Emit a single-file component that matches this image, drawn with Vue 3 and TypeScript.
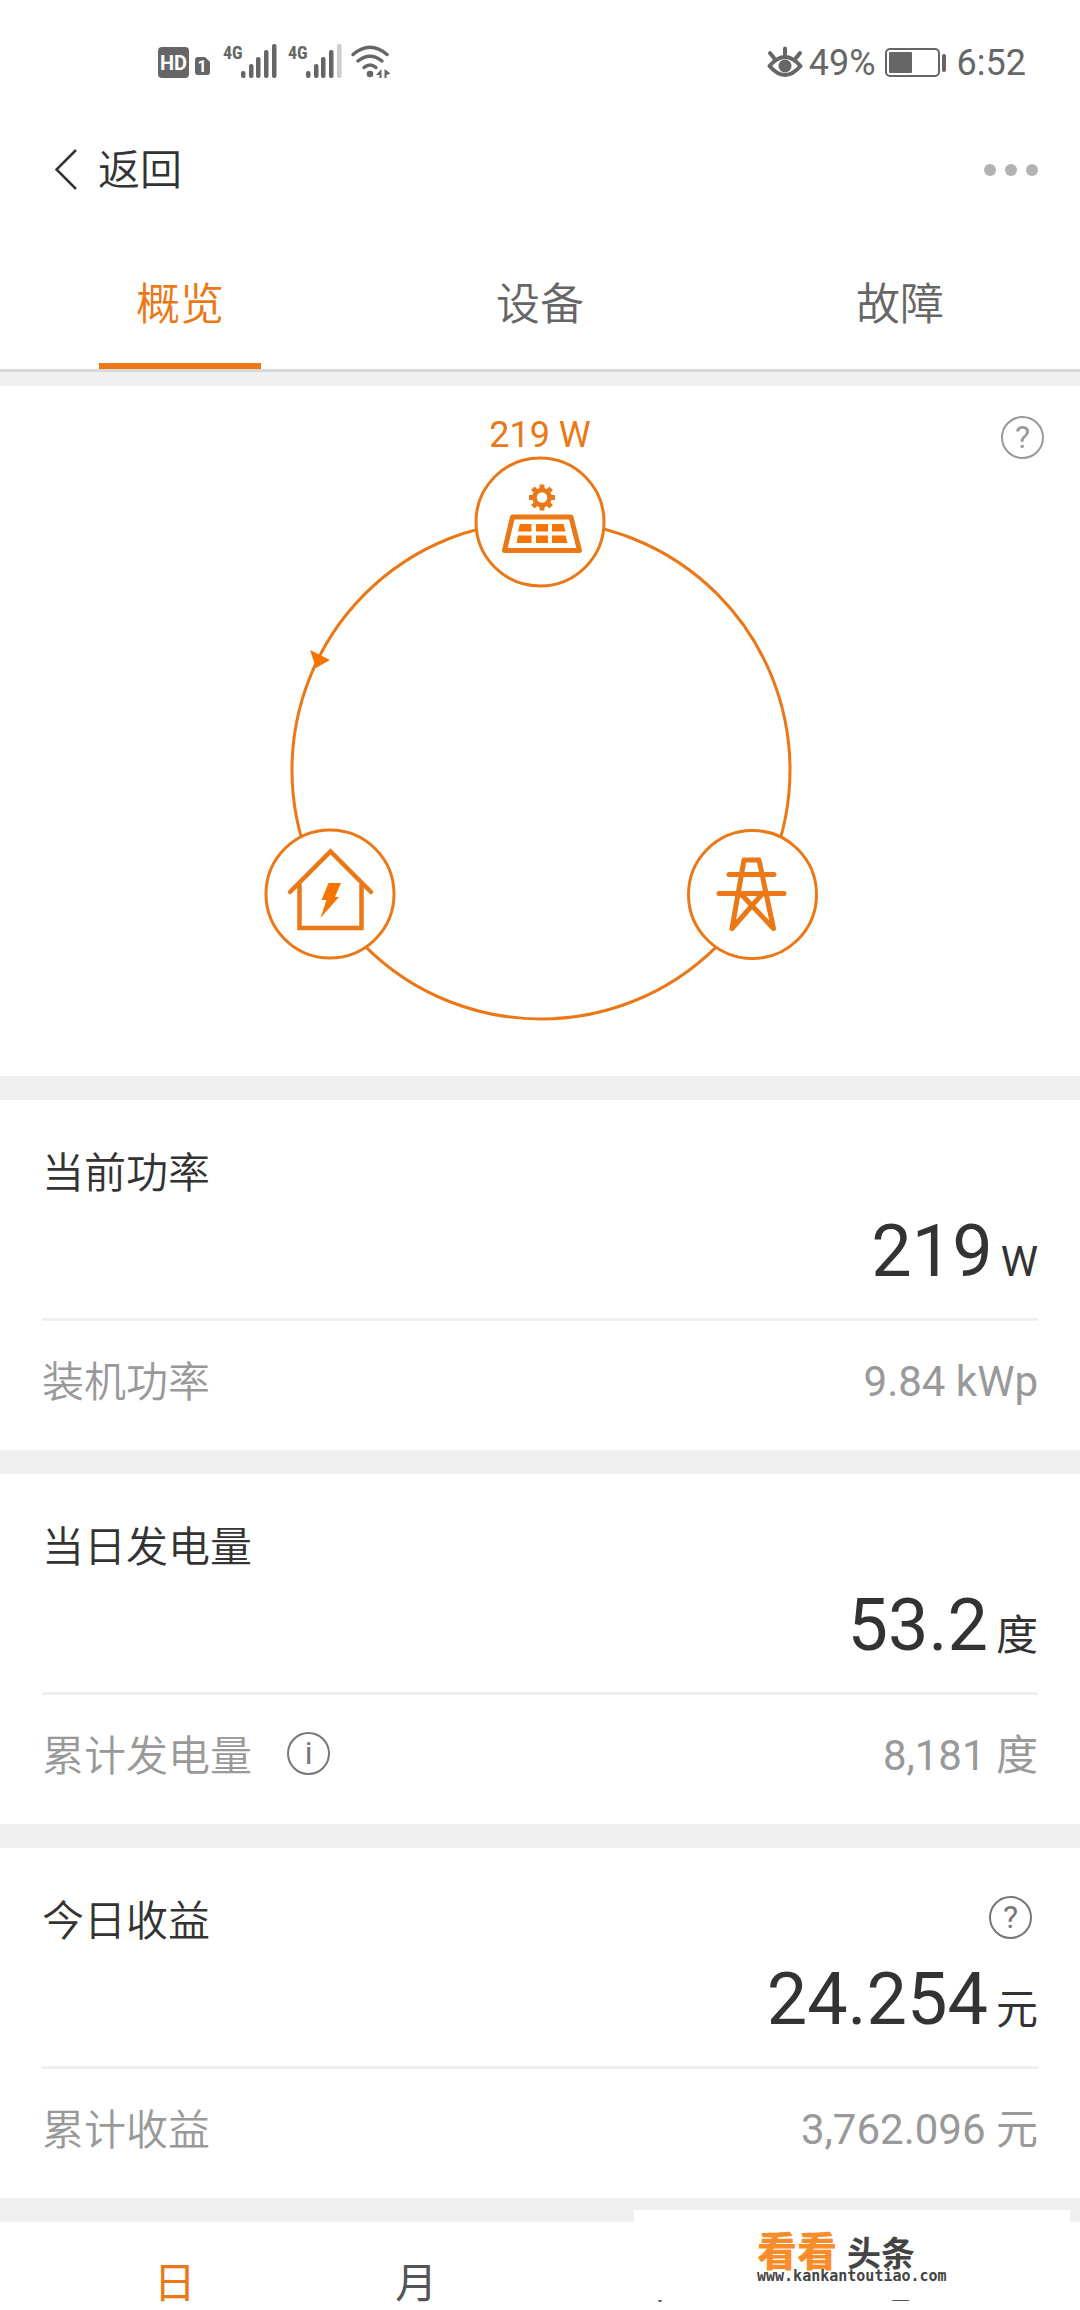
<script setup lang="ts">
import { ref } from 'vue'

interface Metric {
  title: string
  value: string
  unit: string
  totalTitle: string
  total: string
  help?: boolean
  info?: boolean
}

const tabs: string[] = ['概览', '设备', '故障']
const activeTab = ref(0)

const periods: string[] = ['日', '月', '年', '总']
const activePeriod = ref(0)

const metrics: Metric[] = [
  { title: '当前功率', value: '219', unit: 'W', totalTitle: '装机功率', total: '9.84 kWp' },
  { title: '当日发电量', value: '53.2', unit: '度', totalTitle: '累计发电量', total: '8,181 度', info: true },
  { title: '今日收益', value: '24.254', unit: '元', totalTitle: '累计收益', total: '3,762.096 元', help: true },
]

const gearAngles: number[] = [0, 45, 90, 135, 180, 225, 270, 315]
const signalBars = [
  { x: 0, y: 29, h: 6 },
  { x: 8, y: 22, h: 13 },
  { x: 15, y: 15, h: 20 },
  { x: 23, y: 8, h: 27 },
  { x: 31, y: 2, h: 33 },
]
</script>

<template>
  <div class="page">
    <div class="status">
      <svg class="status-left" width="240" height="40" viewBox="0 0 240 40" fill="#666">
        <rect x="1" y="4" width="31" height="31" rx="4" />
        <text x="16.5" y="27" font-size="20" font-weight="700" fill="#fff" text-anchor="middle">HD</text>
        <path d="M41 14h7l5 5v10a3 3 0 0 1-3 3H41a3 3 0 0 1-3-3V17a3 3 0 0 1 3-3z" />
        <text x="45" y="29" font-size="16" font-weight="700" fill="#fff" text-anchor="middle">1</text>
        <g v-for="n in 2" :key="n" :transform="`translate(${(n - 1) * 65} 0)`">
          <text class="narrow" x="66" y="16" font-size="18" font-weight="700">4G</text>
          <rect
            v-for="(b, i) in signalBars"
            :key="i"
            :x="84 + b.x"
            :y="b.y - 1"
            width="4.500"
            :height="b.h + 1"
            rx="2"
            :fill="n === 2 && i === 4 ? '#ccc' : '#666'"
          />
        </g>
        <g fill="none" stroke="#666" stroke-width="3.500" stroke-linecap="round">
          <path d="M196 11.500Q213-3 230 11.500" />
          <path d="M201 18Q213 8.500 225 18" />
          <path d="M207 24.500Q213 19.500 219 24.500" />
        </g>
        <circle cx="213" cy="31" r="3.300" />
        <path d="M219 32l5.500-6v9h-2v-3zM227.500 26l6 4.500-4 1.500v3h-2z" />
      </svg>
      <div class="status-right">
        <svg width="38" height="34" viewBox="0 0 38 34" fill="none" stroke="#666" stroke-width="4" stroke-linecap="round">
          <path d="M2.500 20Q18 2 33.500 20Q18 38 2.500 20z" stroke-linejoin="round" />
          <path d="M18 2.500v6M3 7l4 5M33 7l-4 5" />
          <circle cx="18" cy="20" r="6.500" fill="#666" stroke="none" />
        </svg>
        <span class="percent">49%</span>
        <svg width="62" height="30" viewBox="0 0 62 30">
          <rect x="1" y="1" width="53" height="27" rx="4" fill="none" stroke="#666" stroke-width="2" />
          <rect x="4" y="4" width="23" height="21" rx="1" fill="#666" />
          <rect x="57" y="6" width="4" height="18" rx="2" fill="#666" />
        </svg>
        <time class="clock">6:52</time>
      </div>
    </div>

    <header class="header">
      <button class="back" type="button">
        <svg width="22" height="42" viewBox="0 0 22 42" fill="none" stroke="#333" stroke-width="2.500">
          <path d="M21 1L1.500 20.500L21 40" />
        </svg>
        <span>返回</span>
      </button>
      <button class="more" type="button" aria-label="更多"><i></i><i></i><i></i></button>
    </header>

    <nav class="tabs">
      <button
        v-for="(tab, i) in tabs"
        :key="tab"
        type="button"
        :class="['tab', { active: i === activeTab }]"
        @click="activeTab = i"
      >
        {{ tab }}
      </button>
    </nav>

    <main>
      <section class="flow">
        <button class="round flow-help" type="button" aria-label="帮助">?</button>
        <p class="flow-power">219 W</p>
        <svg class="flow-chart" width="560" height="571" viewBox="0 3 560 571" fill="none" stroke="#eb7816" stroke-width="3">
          <circle cx="281" cy="320" r="249" />
          <path d="M50 200L70 210L56 218z" fill="#f57500" stroke="none" />
          <g fill="#fff">
            <circle cx="280" cy="72" r="64" />
            <circle cx="70" cy="444" r="64" />
            <circle cx="492.500" cy="444.500" r="64" />
          </g>
          <!-- solar panel -->
          <g>
            <circle cx="282" cy="47.500" r="7.500" stroke-width="4.500" />
            <rect
              v-for="a in gearAngles"
              :key="a"
              x="279.500"
              y="34.500"
              width="5"
              height="5"
              fill="#eb7816"
              stroke="none"
              :transform="`rotate(${a} 282 47.500)`"
            />
            <path d="M252.500 67H311L319.500 100.500H244.500z" stroke-width="5" stroke-linejoin="round" />
            <path
              d="M260 74h11.500v7.500H258zM276 74h12v7.500h-12zM292 74h11.500l2 7.500H292zM258 85.500h13.500V93H256.500zM276 85.500h12V93h-12zM292 85.500h13.500l2 7.500H292z"
              fill="#f57500"
              stroke="none"
            />
          </g>
          <!-- house -->
          <g stroke-width="4.500" stroke-linecap="round">
            <path d="M30 442L70.500 401.500L111 442" />
            <path d="M39.500 434V478H101.500V434" stroke-linecap="butt" />
            <path d="M68.500 433H81L75 447H79L60.500 468L66.500 450H61.500z" fill="#f57500" stroke="none" />
          </g>
          <!-- transmission tower -->
          <g stroke-width="5" stroke-linecap="round" stroke-linejoin="round">
            <path d="M472 478.500L484 410H499L513.500 478.500L480 443M472 478.500L503 443" />
            <path d="M469 424.500H514M459 443.500H524" />
          </g>
        </svg>
      </section>

      <section v-for="m in metrics" :key="m.title" class="card">
        <div class="card-head">
          <h2>{{ m.title }}</h2>
          <button v-if="m.help" class="round dark raised" type="button" aria-label="帮助">?</button>
        </div>
        <p class="value"><strong>{{ m.value }}</strong><span>{{ m.unit }}</span></p>
        <div class="total">
          <span class="total-title">{{ m.totalTitle }}</span>
          <button v-if="m.info" class="round dark info" type="button" aria-label="说明">i</button>
          <span class="total-value">{{ m.total }}</span>
        </div>
      </section>

      <section class="periods">
        <button
          v-for="(p, i) in periods"
          :key="p"
          type="button"
          :class="{ active: i === activePeriod }"
          @click="activePeriod = i"
        >
          {{ p }}
        </button>
        <a class="brand" href="#">
          <span class="brand-name"><b>看看</b><em>头条</em></span>
          <span class="brand-url">www.kankantoutiao.com</span>
        </a>
      </section>
    </main>
  </div>
</template>

<style>
body {
  margin: 0;
  background: #fff;
}
</style>

<style scoped>
.page {
  font-family: Roboto, 'Noto Sans CJK SC', sans-serif;
  color: #333;
  background: #fff;
  overflow: hidden;
}

button {
  border: 0;
  padding: 0;
  background: none;
  font: inherit;
  color: inherit;
  cursor: pointer;
}

h2,
p {
  margin: 0;
  font-weight: 400;
}

.status {
  display: flex;
  justify-content: space-between;
  align-items: center;
  height: 126px;
  padding: 0 54px 0 157px;
  color: #666;
}

.narrow {
  font-family: 'Roboto Condensed', 'Liberation Sans Narrow', Roboto, sans-serif;
}

.status-right {
  display: flex;
  align-items: center;
  font-size: 36px;
  line-height: 42px;
}

.percent {
  margin: 0 9px 0 4px;
}

.clock {
  margin-left: 10px;
}

.header {
  display: flex;
  justify-content: space-between;
  align-items: center;
  height: 88px;
  margin-bottom: 23px;
  padding: 0 42px 0 55px;
}

.back {
  display: flex;
  align-items: center;
  gap: 21px;
  font-size: 42px;
  font-weight: 350;
  line-height: 60px;
}

.back span {
  padding-top: 2px;
}

.more {
  display: flex;
  gap: 9px;
}

.more i {
  width: 12px;
  height: 12px;
  border-radius: 50%;
  background: #b2b2b2;
}

.tabs {
  display: flex;
  border-bottom: 3px solid #d9d9d9;
}

.tab {
  position: relative;
  flex: 1;
  height: 132px;
  padding-top: 4px;
  font-size: 44px;
  font-weight: 350;
  line-height: 60px;
  color: #666;
}

.tab.active {
  color: #eb7816;
}

.tab.active::after {
  content: '';
  position: absolute;
  left: 50%;
  bottom: 0;
  width: 162px;
  height: 6px;
  margin-left: -81px;
  background: #eb7816;
}

main {
  display: flex;
  flex-direction: column;
  gap: 24px;
  background: #f0f0f0;
}

.flow {
  position: relative;
  display: flex;
  flex-direction: column;
  align-items: center;
  border-top: 14px solid #f0f0f0;
  padding: 31px 0 52px;
  background: #fff;
}

.flow-power {
  font-size: 36px;
  line-height: 36px;
  color: #eb7816;
}

.flow-help {
  position: absolute;
  top: 30px;
  right: 36px;
}

.round {
  box-sizing: border-box;
  width: 43px;
  height: 43px;
  border: 2px solid #999;
  border-radius: 50%;
  font-size: 32px;
  line-height: 39px;
  text-align: center;
  color: #999;
}

.round.dark {
  border-color: #777;
  color: #777;
}

.round.raised {
  margin-bottom: 9px;
}

.round.info {
  margin: 0 0 5px 35px;
}

.card {
  padding: 0 42px;
  background: #fff;
}

.card-head {
  display: flex;
  justify-content: space-between;
  align-items: center;
  height: 60px;
  padding: 44px 6px 0 0;
}

h2 {
  font-size: 42px;
  font-weight: 350;
  line-height: 60px;
}

.value {
  display: flex;
  justify-content: flex-end;
  align-items: baseline;
  gap: 8px;
  height: 84px;
  padding: 6px 0 24px;
  border-bottom: 3px solid #f0f0f0;
  font-size: 42px;
  line-height: 84px;
}

.value strong {
  font-size: 72px;
  font-weight: 400;
}

.total {
  display: flex;
  align-items: center;
  height: 60px;
  padding: 31px 0 38px;
  font-size: 42px;
  line-height: 60px;
  color: #999;
}

.total-title {
  padding-top: 2px;
  font-weight: 350;
}

.total-value {
  margin-left: auto;
}

.periods {
  position: relative;
  display: flex;
  padding: 36px 60px 0 54px;
  background: #fff;
}

.periods button {
  flex: 1;
  height: 52px;
  font-size: 42px;
  line-height: 52px;
  color: #555;
}

.periods button.active {
  color: #eb7816;
}

.brand {
  position: absolute;
  top: -12px;
  right: 10px;
  box-sizing: border-box;
  width: 436px;
  height: 90px;
  padding: 27px 0 0 123px;
  background: #fff;
  color: #444;
  text-decoration: none;
}

.brand-name {
  display: flex;
  align-items: baseline;
  gap: 10px;
  height: 31px;
  line-height: 31px;
}

.brand-name b {
  font-size: 40px;
  font-weight: 900;
  color: #fb8c2a;
}

.brand-name em {
  font-size: 34px;
  font-style: normal;
  font-weight: 700;
}

.brand-url {
  display: block;
  font: 700 15px/16px 'DejaVu Sans Mono', 'Liberation Mono', monospace;
}
</style>
